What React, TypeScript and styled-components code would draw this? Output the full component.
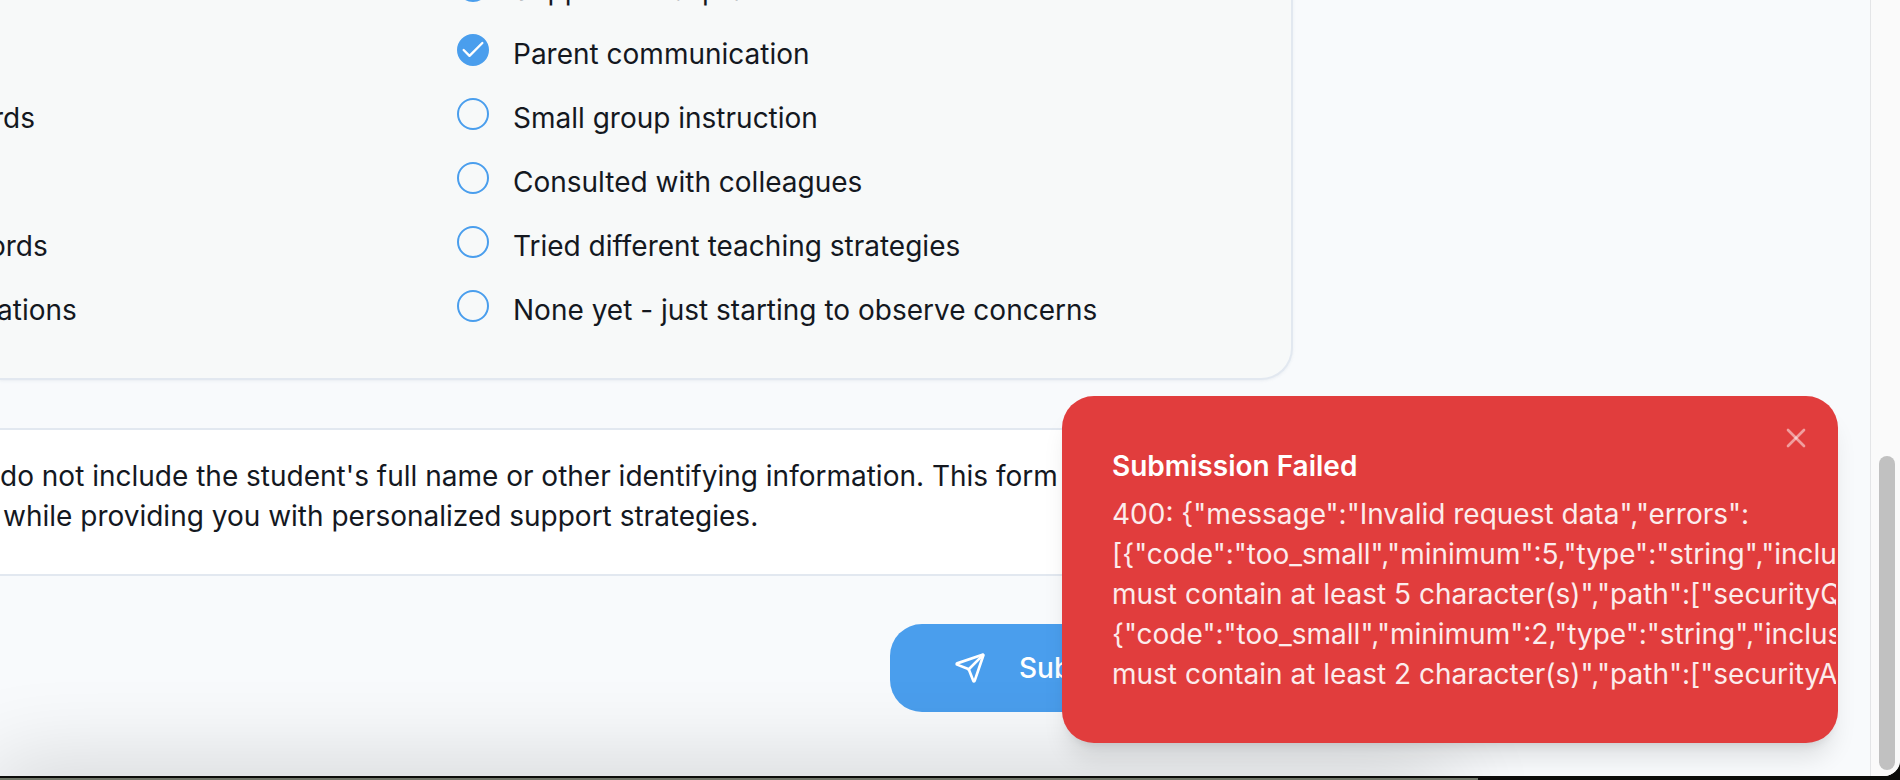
import React from "react";
import styled, { createGlobalStyle } from "styled-components";
import { Check, Send, X } from "lucide-react";

const Global = createGlobalStyle`
  html, body { margin: 0; padding: 0; height: 100%; overflow: hidden; background: #0c0c0a; }
  #root { height: 100%; }
  * { box-sizing: border-box; }
`;

const Window = styled.div`
  position: relative;
  display: flex;
  width: 1900px;
  height: 776px;
  overflow: hidden;
  font-family: Inter, "Liberation Sans", sans-serif;
  color: #14181f;
  background: #f8fafc;
  border-bottom-right-radius: 16px;
`;

const DesktopStrip = styled.div`
  width: 1478px;
  height: 2px;
  margin-top: 2px;
  background: #6f7568;
`;

const Main = styled.main`
  flex: 1;
  min-width: 0;
  display: flex;
  flex-direction: column;
  justify-content: flex-end;
  padding-bottom: 64px;
  overflow: hidden;
`;

const Column = styled.div`
  width: 1293px;
  flex: none;
  display: flex;
  flex-direction: column;
  gap: 48px;
`;

const Card = styled.section`
  flex: none;
  display: grid;
  grid-template-columns: 457px 1fr;
  padding: 0 0 48px 0;
  background: #f7f9f9;
  border: solid #e2e8f0;
  border-width: 0 2px 2px 0;
  border-bottom-right-radius: 32px;
  box-shadow: 0 1px 3px rgba(148, 163, 184, 0.14);
`;

const Options = styled.div`
  display: flex;
  flex-direction: column;
  gap: 24px;
`;

const Option = styled.div`
  display: flex;
  align-items: flex-start;
  gap: 24px;
  height: 40px;
  font-size: 28px;
  line-height: 40px;
  white-space: nowrap;
`;

const LeftLabel = styled.div<{ $shift?: number }>`
  height: 40px;
  margin-left: ${(p) => -(p.$shift ?? 0)}px;
  font-size: 28px;
  line-height: 40px;
  white-space: nowrap;
`;

const Radio = styled.span<{ $checked?: boolean }>`
  flex: none;
  display: flex;
  align-items: center;
  justify-content: center;
  width: 32px;
  height: 32px;
  border-radius: 50%;
  border: 2px solid #4a9eed;
  background: ${(p) => (p.$checked ? "#4a9eed" : "transparent")};
  color: #fff;
`;

const Notice = styled.div`
  flex: none;
  padding: 26px 0 0;
  height: 148px;
  background: #fff;
  border: solid #e2e8f0;
  border-width: 2px 0;
  font-size: 28px;
  line-height: 40px;
  white-space: nowrap;
`;

const NoticeLine = styled.div<{ $inset?: number }>`
  padding-left: ${(p) => p.$inset ?? 0}px;
`;

const Actions = styled.div`
  display: flex;
  justify-content: flex-end;
`;

const SubmitButton = styled.button`
  display: flex;
  align-items: center;
  gap: 33px;
  width: 403px;
  height: 88px;
  padding: 0 0 0 64px;
  border: 0;
  border-radius: 32px;
  background: #4a9eed;
  color: #fff;
  font: 500 28px Inter, "Liberation Sans", sans-serif;
`;

const Scrollbar = styled.aside`
  flex: none;
  width: 30px;
  padding: 456px 6px 6px 8px;
  background: #fafafa;
  border-left: 1px solid #e4e5e7;
`;

const Thumb = styled.div`
  width: 16px;
  height: 314px;
  border-radius: 8px;
  background: #c1c1c1;
`;

const BottomShade = styled.div`
  position: absolute;
  left: 0;
  bottom: -60px;
  width: 1440px;
  height: 60px;
  background: #000;
  box-shadow: 0 0 90px 10px rgba(0, 0, 0, 0.16);
`;

const Toast = styled.div`
  position: absolute;
  left: 1062px;
  top: 396px;
  width: 776px;
  height: 347px;
  padding: 51px 2px 0 50px;
  border-radius: 32px;
  background: #e13d3d;
  color: #fff;
  box-shadow: 0 20px 25px -5px rgba(0, 0, 0, 0.1), 0 8px 10px -6px rgba(0, 0, 0, 0.1);
`;

const ToastTitle = styled.div`
  font-size: 28px;
  line-height: 38px;
  font-weight: 600;
`;

const ToastBody = styled.div`
  margin-top: 9px;
  font-size: 28px;
  line-height: 40px;
  white-space: nowrap;
  overflow: hidden;
  opacity: 0.9;
`;

const CloseButton = styled.button`
  position: absolute;
  top: 26px;
  right: 26px;
  display: flex;
  padding: 0;
  border: 0;
  background: none;
  color: rgba(255, 255, 255, 0.5);
`;

const App: React.FC = () => {
  const rows: { left?: string; shift?: number; label: string; checked?: boolean }[] = [
    { label: "Supplemental practice", checked: true },
    { label: "Parent communication", checked: true },
    { left: "rds", shift: 7, label: "Small group instruction" },
    { label: "Consulted with colleagues" },
    { left: "ords", shift: 11, label: "Tried different teaching strategies" },
    { left: "ations", shift: 3, label: "None yet - just starting to observe concerns" },
  ];
  return (
    <>
      <Global />
      <Window>
        <Main>
          <Column>
            <Card>
              <Options>
                {rows.map((r) => (
                  <LeftLabel key={r.label} $shift={r.shift}>
                    {r.left}
                  </LeftLabel>
                ))}
              </Options>
              <Options>
                {rows.map((r) => (
                  <Option key={r.label}>
                    <Radio $checked={r.checked}>
                      {r.checked && <Check size={28} strokeWidth={2} />}
                    </Radio>
                    {r.label}
                  </Option>
                ))}
              </Options>
            </Card>
            <Notice>
              <NoticeLine>
                do not include the student's full name or other identifying information. This form
              </NoticeLine>
              <NoticeLine $inset={3}>
                while providing you with personalized support strategies.
              </NoticeLine>
            </Notice>
            <Actions>
              <SubmitButton>
                <Send size={32} />
                Submit
              </SubmitButton>
            </Actions>
          </Column>
        </Main>
        <Scrollbar>
          <Thumb />
        </Scrollbar>
        <BottomShade />
        <Toast>
          <CloseButton aria-label="Close">
            <X size={32} />
          </CloseButton>
          <ToastTitle>Submission Failed</ToastTitle>
          <ToastBody>
            <div>400: {'{"message":"Invalid request data","errors":'}</div>
            <div>{'[{"code":"too_small","minimum":5,"type":"string","inclusive":true'}</div>
            <div>{'must contain at least 5 character(s)","path":["securityQuestion"]'}</div>
            <div>{'{"code":"too_small","minimum":2,"type":"string","inclusive":true'}</div>
            <div>{'must contain at least 2 character(s)","path":["securityAnswer"]'}</div>
          </ToastBody>
        </Toast>
      </Window>
      <DesktopStrip />
    </>
  );
};

export default App;
